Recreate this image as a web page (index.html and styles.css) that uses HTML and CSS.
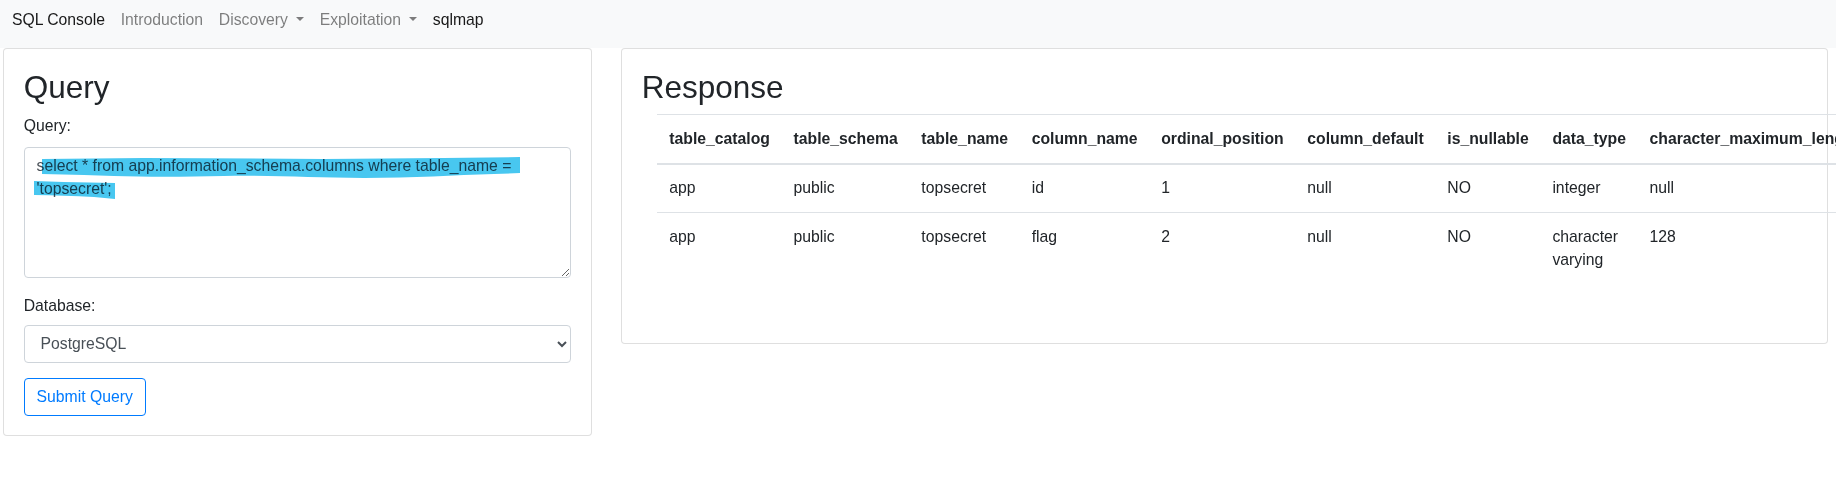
FILE: index.html
```html
<!DOCTYPE html>
<html lang="en">
<head>
<meta charset="utf-8">
<title>SQL Console</title>
<link rel="stylesheet" href="styles.css">
</head>
<body>
<nav class="navbar">
  <a class="nav-link brand" href="#">SQL Console</a>
  <a class="nav-link" href="#">Introduction</a>
  <a class="nav-link dropdown-toggle" href="#">Discovery</a>
  <a class="nav-link dropdown-toggle" href="#">Exploitation</a>
  <a class="nav-link active" href="#">sqlmap</a>
</nav>
<main class="main">
  <section class="card card-query">
    <div class="card-body">
      <h2 class="card-title">Query</h2>
      <form class="query-form">
        <div class="form-group">
          <label for="query">Query:</label>
          <div class="textarea-wrap">
            <svg class="highlight" width="548" height="131" viewBox="0 0 548 131" aria-hidden="true">
              <path d="M18,12 L120,11 L300,12 L420,11 L496,10 L496,26 L470,27 C430,28 390,31 340,31 C290,31 250,28 200,29 C160,30 120,30 90,29 L60,28 L18,27 Z" fill="#48c7f0"/>
              <path d="M10,34 L40,35 L91,36 L91,52 L70,50 C50,49 30,48 10,48 Z" fill="#48c7f0"/>
            </svg>
            <textarea id="query" class="form-control query-input" spellcheck="false">select * from app.information_schema.columns where table_name = 'topsecret';</textarea>
          </div>
        </div>
        <div class="form-group">
          <label for="db">Database:</label>
          <select id="db" class="form-control">
            <option>PostgreSQL</option>
            <option>MySQL</option>
            <option>SQLite</option>
          </select>
        </div>
        <button type="button" class="btn btn-outline-primary">Submit Query</button>
      </form>
    </div>
  </section>
  <section class="card card-response">
    <div class="card-body">
      <h2 class="card-title">Response</h2>
      <div class="table-wrap">
        <table class="table">
          <thead>
            <tr>
              <th>table_catalog</th>
              <th>table_schema</th>
              <th>table_name</th>
              <th>column_name</th>
              <th>ordinal_position</th>
              <th>column_default</th>
              <th>is_nullable</th>
              <th>data_type</th>
              <th>character_maximum_length</th>
              <th>character_octet_length</th>
              <th>numeric_precision</th>
              <th>numeric_precision_radix</th>
            </tr>
          </thead>
          <tbody>
            <tr>
              <td>app</td>
              <td>public</td>
              <td>topsecret</td>
              <td>id</td>
              <td>1</td>
              <td>null</td>
              <td>NO</td>
              <td>integer</td>
              <td>null</td>
              <td>null</td>
              <td>32</td>
              <td>2</td>
            </tr>
            <tr>
              <td>app</td>
              <td>public</td>
              <td>topsecret</td>
              <td>flag</td>
              <td>2</td>
              <td>null</td>
              <td>NO</td>
              <td>character varying</td>
              <td>128</td>
              <td>512</td>
              <td>null</td>
              <td>null</td>
            </tr>
          </tbody>
        </table>
      </div>
    </div>
  </section>
</main>
</body>
</html>
```
FILE: styles.css
```css
html {
  font-size: 15.75px;
  overflow: hidden;
}

body {
  margin: 0;
  font-family: "Liberation Sans", Arial, sans-serif;
  font-size: 1rem;
  line-height: 1.5;
  color: #212529;
  background: #fff;
  overflow: hidden;
}

.navbar {
  display: flex;
  align-items: flex-start;
  height: 48px;
  box-sizing: border-box;
  padding: 0 4px 8px;
  background: #f8f9fa;
}

.nav-link {
  display: block;
  padding: 0.5rem;
  color: rgba(0, 0, 0, 0.5);
  text-decoration: none;
  white-space: nowrap;
}

.nav-link.brand,
.nav-link.active {
  color: rgba(0, 0, 0, 0.9);
}

.dropdown-toggle::after {
  display: inline-block;
  margin-left: 8px;
  vertical-align: 0.255em;
  content: "";
  border-top: 0.3em solid;
  border-right: 0.3em solid transparent;
  border-left: 0.3em solid transparent;
  border-bottom: 0;
}

.main {
  display: flex;
  align-items: flex-start;
  gap: 29px;
  padding-left: 3px;
}

.card {
  flex: none;
  box-sizing: border-box;
  background: #fff;
  border: 1px solid rgba(0, 0, 0, 0.125);
  border-radius: 4px;
}

.card-query {
  width: 589px;
}

.card-response {
  width: 1207px;
}

.card-body {
  padding: 1.25rem;
}

.card-title {
  margin: 0 0 0.5rem;
  font-size: 2rem;
  font-weight: 500;
  line-height: 1.2;
}

.form-group {
  margin-bottom: 1rem;
}

label {
  display: inline-block;
  margin-bottom: 0.5rem;
}

.form-control {
  display: block;
  width: 100%;
  box-sizing: border-box;
  padding: 0.375rem 0.75rem;
  font-family: inherit;
  font-size: 1rem;
  line-height: 1.5;
  color: #495057;
  background-color: #fff;
  border: 1px solid #ced4da;
  border-radius: 4px;
}

.textarea-wrap {
  position: relative;
  margin-top: 1px;
  background: #fff;
  border-radius: 4px;
}

.highlight {
  position: absolute;
  left: 0;
  top: 0;
}

.query-input {
  position: relative;
  height: 131px;
  background-color: transparent;
  mix-blend-mode: multiply;
}

select.form-control {
  height: calc(1.5em + 0.75rem + 2px);
}

.btn {
  display: inline-block;
  padding: 0.375rem 0.75rem;
  font-family: inherit;
  font-size: 1rem;
  line-height: 1.5;
  border-radius: 4px;
  cursor: pointer;
}

.btn-outline-primary {
  color: #007bff;
  background: transparent;
  border: 1px solid #007bff;
}

.card-response .card-body {
  padding-bottom: calc(1.25rem + 1.5em);
}

.table-wrap {
  margin-left: 1rem;
}

.table {
  width: 100%;
  border-collapse: collapse;
  color: #212529;
  margin-bottom: 1rem;
}

.table th,
.table td {
  padding: 0.75rem;
  text-align: left;
  vertical-align: top;
  border-top: 1px solid #dee2e6;
}

.table thead th {
  vertical-align: bottom;
  border-bottom: 2px solid #dee2e6;
}
```
